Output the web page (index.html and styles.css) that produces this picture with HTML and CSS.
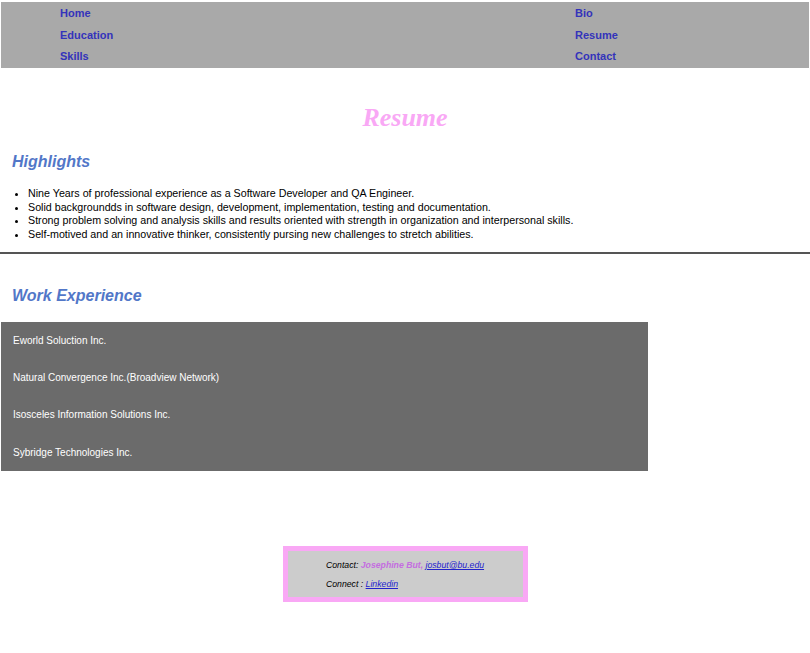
FILE: index.html
```html
<!DOCTYPE html>
<html>
<head>
<meta charset="utf-8">
<link rel="stylesheet" href="styles.css">
</head>
<body>
<nav class="nav">
  <ul class="nav-col left">
    <li><a href="#">Home</a></li>
    <li><a href="#">Education</a></li>
    <li><a href="#">Skills</a></li>
  </ul>
  <ul class="nav-col right">
    <li><a href="#">Bio</a></li>
    <li><a href="#">Resume</a></li>
    <li><a href="#">Contact</a></li>
  </ul>
</nav>
<h1 class="title">Resume</h1>
<h2 class="section-title">Highlights</h2>
<ul class="highlights">
  <li>Nine Years of professional experience as a Software Developer and QA Engineer.</li>
  <li>Solid backgroundds in software design, development, implementation, testing and documentation.</li>
  <li>Strong problem solving and analysis skills and results oriented with strength in organization and interpersonal skills.</li>
  <li>Self-motived and an innovative thinker, consistently pursing new challenges to stretch abilities.</li>
</ul>
<hr class="divider">
<h2 class="section-title work">Work Experience</h2>
<ul class="jobs">
  <li>Eworld Soluction Inc.</li>
  <li>Natural Convergence Inc.(Broadview Network)</li>
  <li>Isosceles Information Solutions Inc.</li>
  <li>Sybridge Technologies Inc.</li>
</ul>
<footer class="footer">
  <p>Contact: <span class="name">Josephine But,</span> <a href="#">josbut@bu.edu</a></p>
  <p>Connect : <a href="#">Linkedin</a></p>
</footer>
</body>
</html>
```
FILE: styles.css
```css
html, body {
  margin: 0;
  padding: 0;
  background: #fff;
  font-family: "Liberation Sans", Arial, sans-serif;
}
.nav {
  margin: 2px 1px 0 1px;
  height: 66px;
  background: #a9a9a9;
  display: flex;
}
.nav-col {
  list-style: none;
  margin: 0;
  padding: 0;
  display: flex;
  flex-direction: column;
}
.nav-col.left { padding-left: 59px; width: 456px; }
.nav-col.right { padding-left: 59px; }
.nav-col li {
  height: 21.5px;
  line-height: 22px;
  font-size: 11px;
  font-weight: bold;
}
.nav a {
  color: #3333bb;
  text-decoration: none;
}
.title {
  margin: 35px 0 0 0;
  text-align: center;
  font-family: "Liberation Serif", "Times New Roman", serif;
  font-style: italic;
  font-weight: bold;
  font-size: 26px;
  line-height: 30px;
  color: #f9a8f5;
}
.section-title {
  margin: 18px 0 0 12px;
  font-style: italic;
  font-weight: bold;
  font-size: 16px;
  line-height: 22px;
  color: #5277c8;
}
.highlights {
  margin: 14px 0 0 0;
  padding-left: 28px;
  font-size: 10.7px;
  line-height: 13.7px;
  color: #000;
}
.divider {
  margin: 10px 0 0 0;
  border: 0;
  height: 2px;
  background: #555;
}
.section-title.work {
  margin-top: 31px;
}
.jobs {
  list-style: none;
  margin: 15px 0 0 1px;
  padding: 0;
  width: 647px;
  background: #6b6b6b;
  height: 149px;
  display: flex;
  flex-direction: column;
}
.jobs li {
  height: 37.3px;
  line-height: 37px;
  padding-left: 12px;
  font-size: 10px;
  color: #fff;
}
.footer {
  width: 245px;
  margin: 75px 0 0 283px;
  border: 5px solid #f9a8f5;
  background: #cccccc;
  padding: 5px 0 5px 38px;
  box-sizing: border-box;
  height: 56px;
  font-size: 8.7px;
  font-style: italic;
  color: #000;
}
.footer p {
  margin: 0;
  line-height: 19px;
}
.footer .name {
  color: #c46de0;
  font-weight: bold;
}
.footer a {
  color: #2222cc;
}
```
